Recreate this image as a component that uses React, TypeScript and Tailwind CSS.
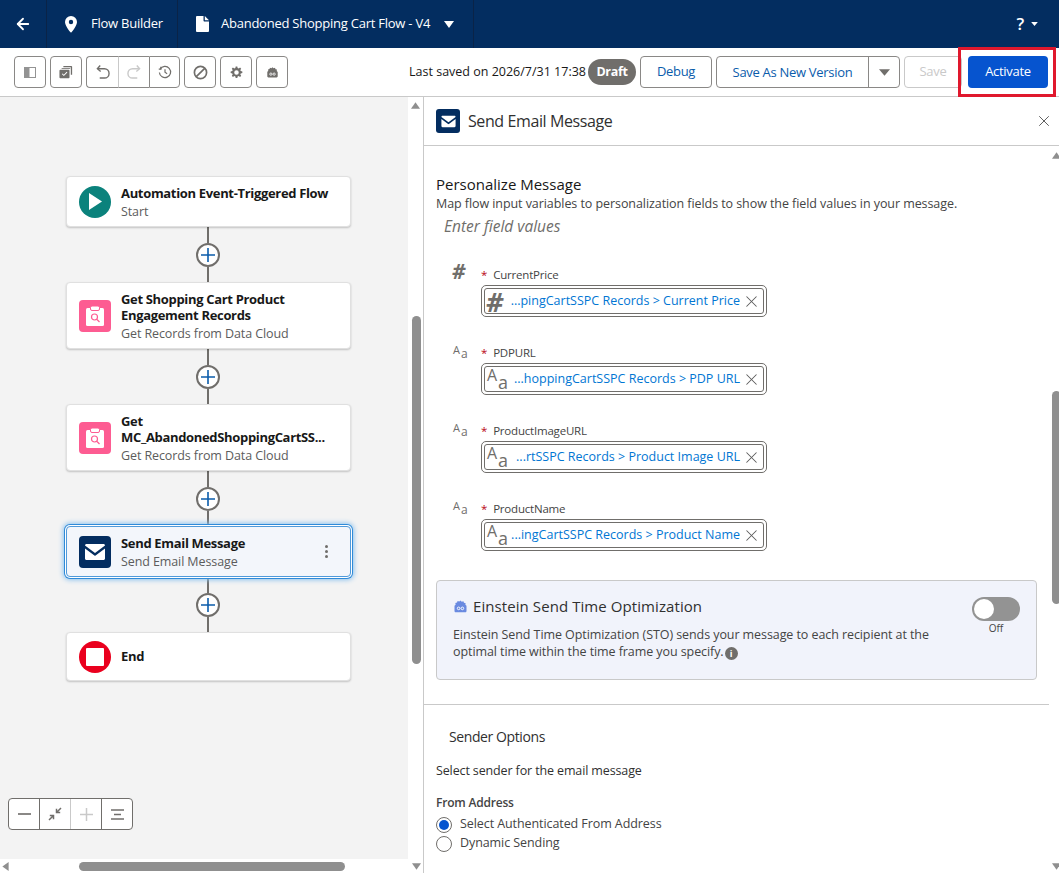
import React from "react";
import { ArrowLeft, X } from "lucide-react";

const Mail = ({ s = 20 }: { s?: number }) => (
  <svg width={s} height={s} viewBox="0 0 24 24" fill="white">
    <path d="M2 5.500C2 4.700 2.700 4 3.500 4h17c.8 0 1.500.7 1.500 1.500L12 13 2 5.500Z" />
    <path d="M2 8.500l9.400 7c.4.300.9.300 1.200 0l9.400-7V18.500c0 .8-.7 1.500-1.500 1.500h-17C2.700 20 2 19.300 2 18.500V8.500Z" />
  </svg>
);

const ClipSearch = () => (
  <svg width="20" height="22" viewBox="0 0 20 22" fill="none">
    <rect x="1" y="3" width="18" height="18" rx="1.500" fill="white" />
    <rect x="5.500" y="1" width="9" height="4.500" rx="1.500" fill="white" stroke="#fd5c92" strokeWidth="1" />
    <circle cx="9.500" cy="12" r="3" stroke="#fd5c92" strokeWidth="1.200" />
    <path d="M12 14.500l2.500 2.500" stroke="#fd5c92" strokeWidth="1.200" />
  </svg>
);

const Bot = ({ s = 14, c = "#706e6b" }: { s?: number; c?: string }) => (
  <svg width={s} height={s} viewBox="0 0 16 16" fill={c}>
    <path d="M8 1.500l1.300 1.400 1.800-.6.600 1.700 1.800.4-.3 1.800 1.200 1.100v5.400c0 .8-.6 1.300-1.300 1.300H2.900c-.7 0-1.300-.5-1.300-1.300V7.100l1.200-1.100-.3-1.800 1.800-.4.600-1.700 1.800.6L8 1.500Z" />
    <circle cx="6" cy="10" r="1.400" fill="none" stroke="white" strokeWidth="1" />
    <circle cx="10" cy="10" r="1.400" fill="none" stroke="white" strokeWidth="1" />
  </svg>
);

const Plus = () => (
  <div className="flex flex-col items-center h-[55px] w-full pr-[1px]">
    <div className="w-[2px] flex-1 bg-[#706e6b]" />
    <div className="w-6 h-6 rounded-full border-2 border-[#706e6b] bg-white flex items-center justify-center shrink-0">
      <svg width="14" height="14" viewBox="0 0 14 14" stroke="#0b5cab" strokeWidth="1.600">
        <path d="M7 0v14M0 7h14" />
      </svg>
    </div>
    <div className="w-[2px] flex-1 bg-[#706e6b]" />
  </div>
);

const Node = ({
  icon,
  title,
  sub,
  selected,
  h,
}: {
  icon: React.ReactNode;
  title: React.ReactNode;
  sub?: string;
  selected?: boolean;
  h: string;
}) => (
  <div
    className={`w-[285px] ${h} rounded flex items-center px-3 relative ${
      selected
        ? "bg-[#f3f6fb] border border-[#4f9ada] shadow-[0_0_0_1px_#ffffff,0_0_0_2px_#2f8ad8,0_0_5px_3px_#8cc2ee]"
        : "bg-white border border-[#e0e0e0] shadow-[0_1px_2px_rgba(0,0,0,0.2)]"
    }`}
  >
    {icon}
    <div className={`ml-[10px] min-w-0 ${sub ? "mt-[2px]" : "-mt-[2px]"}`}>
      <div className="text-[13px] leading-[16px] font-bold text-[#181818] tracking-[-0.33px]">{title}</div>
      {sub && <div className="mt-[2px] text-[12.500px] leading-[18px] text-[#5c5c5c] tracking-[-0.1px]">{sub}</div>}
    </div>
    {selected && (
      <div className="absolute right-[22px] top-[18px] flex flex-col gap-[2px]">
        <span className="w-[3px] h-[3px] bg-[#706e6b] rounded-full" />
        <span className="w-[3px] h-[3px] bg-[#706e6b] rounded-full" />
        <span className="w-[3px] h-[3px] bg-[#706e6b] rounded-full" />
      </div>
    )}
  </div>
);

const Tile = ({ bg, children }: { bg: string; children: React.ReactNode }) => (
  <div className={`w-8 h-8 rounded shrink-0 flex items-center justify-center ${bg}`}>{children}</div>
);

const TB = ({ children, cls = "" }: { children: React.ReactNode; cls?: string }) => (
  <div className={`w-8 h-8 flex items-center justify-center border border-[#8a8886] bg-white rounded ${cls}`}>{children}</div>
);

const Aa = ({ big }: { big?: boolean }) => (
  <span className={`relative inline-block shrink-0 text-[#706e6b] ${big ? "w-[22px] h-[22px]" : "w-4 h-4"}`}>
    <span className={`absolute leading-none ${big ? "text-[16px] left-0 -top-[1px]" : "text-[11px] left-0 top-0"}`}>A</span>
    <span className={`absolute leading-none ${big ? "text-[18px] left-[11px] top-[5px]" : "text-[12px] left-[8px] top-[4px]"}`}>a</span>
  </span>
);

const Hash = ({ big }: { big?: boolean }) => (
  <span className={`shrink-0 text-[#706e6b] font-bold leading-none italic ${big ? "text-[27px] w-[20px] -ml-[1px]" : "text-[21px] w-4 -ml-[1px]"}`}>#</span>
);

const Field = ({ label, value, hash, mt }: { label: string; value: string; hash?: boolean; mt: string }) => (
  <div className={`flex ${mt}`}>
    <div className={`w-[45px] pl-[17px] ${hash ? "-mt-[6px]" : "-mt-[3px]"}`}>{hash ? <Hash /> : <Aa />}</div>
    <div>
      <div className="text-[11.500px] leading-[16px] text-[#444444] tracking-[-0.2px]">
        <span className="text-[#ba0517] mr-[6px]">*</span>
        {label}
      </div>
      <div className="mt-[2px] w-[286px] h-[32px] border border-[#706e6b] rounded-[5px] p-[2px]">
        <div className="h-full border border-[#706e6b] rounded-[3px] flex items-center pl-[2px] pr-[2px]">
          {hash ? <Hash big /> : <Aa big />}
          <span className="flex-1 text-right text-[12.500px] text-[#0176d3] whitespace-nowrap pr-[2px]">{value}</span>
          <X size={19} strokeWidth={1.300} color="#5c5c5c" className="shrink-0" />
        </div>
      </div>
    </div>
  </div>
);

export default function App() {
  return (
    <div className="w-[1059px] h-[873px] flex flex-col overflow-hidden bg-white relative font-['Open_Sans','Noto_Sans',sans-serif]">
      {/* Global header */}
      <header className="h-12 shrink-0 bg-[#032d60] flex items-center text-white text-[13px] tracking-[-0.24px]">
        <div className="w-[47px] h-full flex items-center pl-[14px] border-r border-[#0a2347]">
          <ArrowLeft size={18} strokeWidth={2.400} />
        </div>
        <div className="w-[131px] h-full flex items-center pl-[17px] border-r border-[#0a2347]">
          <svg width="14" height="17" viewBox="0 0 14 17" fill="white">
            <path fillRule="evenodd" d="M7 0a6 6 0 0 1 6 6c0 3.500-4 8.500-5.500 10.300a.7.7 0 0 1-1 0C5 14.500 1 9.500 1 6a6 6 0 0 1 6-6Zm0 3.800a2.200 2.200 0 1 0 0 4.400 2.200 2.200 0 0 0 0-4.400Z" />
          </svg>
          <span className="ml-[13px]">Flow Builder</span>
        </div>
        <div className="w-[296px] h-full flex items-center pl-[18px] border-r border-[#0a2347]">
          <svg width="13" height="16" viewBox="0 0 13 16" fill="white">
            <path d="M1 0h6.500v4.500c0 .5.400 1 1 1H13V15a1 1 0 0 1-1 1H1a1 1 0 0 1-1-1V1a1 1 0 0 1 1-1Z" />
            <path d="M8.800 0 13 4.200H8.800V0Z" />
          </svg>
          <span className="ml-[12px] whitespace-nowrap">Abandoned Shopping Cart Flow - V4</span>
          <svg className="ml-[14px]" width="10" height="7" viewBox="0 0 10 7" fill="white"><path d="M0 0h10L5 7z" /></svg>
        </div>
        <div className="flex-1" />
        <div className="flex items-center mr-[21px] gap-[7px]">
          <span className="text-[17px] font-semibold">?</span>
          <svg width="7" height="4" viewBox="0 0 10 6" fill="white"><path d="M0 0h10L5 6z" /></svg>
        </div>
      </header>

      {/* Toolbar */}
      <div className="h-[49px] shrink-0 bg-white border-b border-[#c9c9c9] flex items-center pl-[14px] pr-[11px] text-[13px] tracking-[-0.3px]">
        <div className="flex gap-1">
          <TB>
            <svg width="12" height="11" viewBox="0 0 12 11"><rect x=".5" y=".5" width="11" height="10" fill="white" stroke="#939393" /><rect x="1" y="1" width="4.500" height="9" fill="#939393" /></svg>
          </TB>
          <TB>
            <svg width="14" height="14" viewBox="0 0 16 16" fill="#706e6b">
              <path d="M5 1h9a1 1 0 0 1 1 1v9h-1.500V2.500H5z" />
              <path d="M3 3.500h9a1 1 0 0 1 1 .9v.1H3z" opacity=".8" />
              <path fillRule="evenodd" d="M1.500 5.500h9.500a1 1 0 0 1 1 1V14a1 1 0 0 1-1 1H1.500a1 1 0 0 1-1-1V6.500a1 1 0 0 1 1-1Zm7.300 2.300-3.300 3.300-1.500-1.500-.8.800 2.300 2.300 4.100-4.100z" />
            </svg>
          </TB>
          <div className="flex">
            <TB cls="rounded-r-none border-r-0">
              <svg width="14" height="16" viewBox="0 0 15 16" fill="none" stroke="#706e6b" strokeWidth="1.500"><path d="M4.500 1 1.500 4.500 5 7.500" /><path d="M2 4.500h7a4.500 4.500 0 0 1 0 10H4" /></svg>
            </TB>
            <div className="w-[31px] h-8 flex items-center justify-center border-y border-l border-[#c9c9c9] border-y-[#8a8886]">
              <svg width="14" height="16" viewBox="0 0 15 16" fill="none" stroke="#c9c9c9" strokeWidth="1.500"><path d="M10.500 1l3 3.500L10 7.500" /><path d="M13 4.500H6a4.500 4.500 0 0 0 0 10h5" /></svg>
            </div>
            <TB cls="rounded-l-none w-[31px]">
              <svg width="14" height="14" viewBox="0 0 15 15" fill="none" stroke="#706e6b" strokeWidth="1.300"><path d="M2.300 4.500A6 6 0 1 1 1.500 8" /><path d="M.8 4.500h3M3 2v3" /><path d="M7.500 4.500v3.300l2.300 1.500" /></svg>
            </TB>
          </div>
          <TB>
            <svg width="15" height="15" viewBox="0 0 16 16" fill="none" stroke="#706e6b" strokeWidth="1.800"><circle cx="8" cy="8" r="6.500" /><path d="M12.500 3.500 3.500 12.500" /></svg>
          </TB>
          <TB>
            <svg width="13" height="13" viewBox="0 0 16 16" fill="#706e6b">
              <path fillRule="evenodd" d="M7 .5h2l.4 2 1.300.5 1.700-1.100 1.400 1.400-1.100 1.700.5 1.300 2 .4v2l-2 .4-.5 1.300 1.100 1.700-1.400 1.400-1.700-1.100-1.300.5-.4 2H7l-.4-2-1.300-.5-1.700 1.100-1.400-1.400 1.100-1.700-.5-1.300-2-.4v-2l2-.4.500-1.300-1.100-1.700 1.400-1.400 1.700 1.100 1.300-.5.4-2Zm1 4.700a2.800 2.800 0 1 0 0 5.600 2.800 2.800 0 0 0 0-5.600Z" />
            </svg>
          </TB>
          <TB>
            <Bot s={13} />
          </TB>
        </div>
        <div className="flex-1" />
        <span className="text-[#181818] whitespace-nowrap text-[12.500px] tracking-[0px] mr-[2px]">Last saved on 2026/7/31 17:38</span>
        <span className="w-12 h-[26px] rounded-full bg-[#706e6b] text-white font-bold text-[12.500px] flex items-center justify-center">Draft</span>
        <div className="ml-1 w-[72px] h-8 border border-[#8a8886] rounded flex items-center justify-center text-[#0b5cab]">Debug</div>
        <div className="ml-1 w-[184px] h-8 border border-[#8a8886] rounded flex items-center text-[#0b5cab]">
          <span className="w-[152px] text-center border-r border-[#8a8886] leading-[30px]">Save As New Version</span>
          <span className="flex-1 flex justify-center">
            <svg width="11" height="7" viewBox="0 0 10 6" fill="#706e6b"><path d="M0 0h10L5 6z" /></svg>
          </span>
        </div>
        <div className="ml-1 w-[58px] h-8 border border-[#c9c9c9] rounded flex items-center justify-center text-[#c9c9c9]">Save</div>
        <div className="ml-[6px] w-20 h-8 rounded bg-[#0654cf] text-white flex items-center justify-center">Activate</div>
      </div>

      <div className="flex-1 flex min-h-0">
        {/* Canvas */}
        <div className="w-[424px] shrink-0 flex flex-col border-r border-[#c9c9c9]">
          <div className="flex-1 flex min-h-0">
            <div className="w-[408px] bg-[#f3f3f3] relative overflow-hidden">
              <div className="flex flex-col items-center pt-[79px] pl-[9px] w-[408px]">
                <Node
                  h="h-[51px]"
                  icon={
                    <div className="w-8 h-8 rounded-full bg-[#0b827c] shrink-0 flex items-center justify-center">
                      <svg width="14" height="17" viewBox="0 0 14 17" fill="white"><path d="M1 0l13 8.500L1 17z" /></svg>
                    </div>
                  }
                  title="Automation Event-Triggered Flow"
                  sub="Start"
                />
                <Plus />
                <Node
                  h="h-[67px]"
                  icon={<Tile bg="bg-[#fd5c92]"><ClipSearch /></Tile>}
                  title={<>Get Shopping Cart Product<br />Engagement Records</>}
                  sub="Get Records from Data Cloud"
                />
                <Plus />
                <Node
                  h="h-[67px]"
                  icon={<Tile bg="bg-[#fd5c92]"><ClipSearch /></Tile>}
                  title={<>Get<br />MC_AbandonedShoppingCartSS...</>}
                  sub="Get Records from Data Cloud"
                />
                <Plus />
                <Node h="h-[51px]" selected icon={<Tile bg="bg-[#032d60]"><Mail s={24} /></Tile>} title="Send Email Message" sub="Send Email Message" />
                <Plus />
                <Node
                  h="h-[49px]"
                  icon={
                    <div className="w-8 h-8 rounded-full bg-[#ea001e] shrink-0 flex items-center justify-center">
                      <div className="w-[18px] h-[18px] bg-white rounded-[1px]" />
                    </div>
                  }
                  title="End"
                />
              </div>
              {/* zoom controls */}
              <div className="absolute left-2 bottom-[29px] flex h-8 w-[125px] border border-[#706e6b] rounded bg-white">
                <div className="w-[31px] flex items-center justify-center border-r border-[#706e6b]">
                  <span className="w-[13px] h-[2px] bg-[#8a8886]" />
                </div>
                <div className="w-[31px] flex items-center justify-center border-r border-[#c9c9c9]">
                  <svg width="14" height="14" viewBox="0 0 14 14" fill="none" stroke="#706e6b" strokeWidth="1.500">
                    <path d="M13 1 8.500 5.500M8.500 1.800v3.700h3.700M1 13l4.500-4.500M5.500 12.200V8.500H1.800" />
                  </svg>
                </div>
                <div className="w-[31px] flex items-center justify-center border-r border-[#706e6b]">
                  <svg width="13" height="13" viewBox="0 0 13 13" stroke="#c9c9c9" strokeWidth="1.500"><path d="M6.500 0v13M0 6.500h13" /></svg>
                </div>
                <div className="flex-1 flex items-center justify-center">
                  <svg width="13" height="11" viewBox="0 0 13 11" stroke="#706e6b" strokeWidth="1.400"><path d="M0 1h13M3 5.500h7M0 10h13" /></svg>
                </div>
              </div>
            </div>
            {/* vertical scrollbar */}
            <div className="w-[15px] bg-white flex flex-col items-center relative">
              <svg className="mt-[5px]" width="9" height="7" viewBox="0 0 10 7" fill="#8f8f8f"><path d="M5 0l5 7H0z" /></svg>
              <div className="absolute top-[219px] left-[4px] w-[9px] h-[348px] rounded-full bg-[#8f8f8f]" />
            </div>
          </div>
          {/* horizontal scrollbar */}
          <div className="h-[14px] shrink-0 bg-white flex items-center relative">
            <svg className="ml-[2px]" width="7" height="9" viewBox="0 0 7 10" fill="#8f8f8f"><path d="M0 5l7-5v10z" /></svg>
            <div className="absolute left-[79px] top-[3px] w-[266px] h-[9px] rounded-full bg-[#8f8f8f]" />
            <svg className="ml-auto mr-[2px]" width="9" height="7" viewBox="0 0 10 7" fill="#8f8f8f"><path d="M5 7l5-7H0z" /></svg>
          </div>
        </div>

        {/* Right panel */}
        <div className="flex-1 min-w-0 flex flex-col">
          <div className="h-[49px] shrink-0 border-b border-[#c9c9c9] flex items-center pl-[12px] pr-[6px]">
            <div className="w-6 h-6 rounded-[3px] bg-[#032d60] flex items-center justify-center"><Mail s={17} /></div>
            <span className="ml-2 text-[16px] text-[#303030] tracking-[-0.4px] flex-1">Send Email Message</span>
            <X size={18} strokeWidth={1.300} color="#5c5c5c" />
          </div>
          <div className="flex-1 min-h-0 flex">
            <div className="flex-1 min-w-0 pl-[12px] overflow-hidden">
              <div className="pt-[28px] text-[15px] leading-[20px] text-[#181818]">Personalize Message</div>
              <div className="text-[12.500px] leading-[18px] text-[#444444] tracking-[-0.07px] mt-[1px] whitespace-nowrap">Map flow input variables to personalization fields to show the field values in your message.</div>
              <div className="mt-[3px] ml-2 text-[15.500px] leading-[20px] italic text-[#706e6b]">Enter field values</div>

              <Field mt="mt-[31px]" hash label="CurrentPrice" value="...pingCartSSPC Records > Current Price" />
              <Field mt="mt-[28px]" label="PDPURL" value="...hoppingCartSSPC Records > PDP URL" />
              <Field mt="mt-[28px]" label="ProductImageURL" value="...rtSSPC Records > Product Image URL" />
              <Field mt="mt-[28px]" label="ProductName" value="...ingCartSSPC Records > Product Name" />

              <div className="mt-[29px] w-[601px] h-[100px] bg-[#f1f3fb] border border-[#c9c9c9] rounded flex pl-4 pr-[16px] pt-[14px]">
                <div className="flex-1 min-w-0">
                  <div className="flex items-center">
                    <Bot s={15} c="#6a8ae0" />
                    <span className="ml-[5px] text-[15px] leading-[22px] text-[#303030] tracking-[0.08px]">Einstein Send Time Optimization</span>
                  </div>
                  <div className="mt-[9px] text-[12.500px] leading-[17px] text-[#444444] tracking-[-0.08px]">
                    Einstein Send Time Optimization (STO) sends your message to each recipient at the
                    <br />
                    optimal time within the time frame you specify.
                    <span className="inline-flex ml-[1px] w-[13px] h-[13px] rounded-full bg-[#706e6b] text-white text-[9px] font-bold items-center justify-center align-[-1px]">i</span>
                  </div>
                </div>
                <div className="flex flex-col items-center mt-[2px]">
                  <div className="w-12 h-6 rounded-full bg-[#939393] p-[2px]">
                    <div className="w-5 h-5 rounded-full bg-white" />
                  </div>
                  <span className="text-[10px] leading-[14px] text-[#444444]">Off</span>
                </div>
              </div>

              <div className="-ml-[12px] mt-[24px] border-t border-[#c9c9c9]" />
              <div className="mt-[22px] ml-[13px] text-[14px] leading-[20px] text-[#303030] tracking-[-0.4px]">Sender Options</div>
              <div className="mt-[15px] text-[12.500px] leading-[18px] text-[#303030] tracking-[-0.13px]">Select sender for the email message</div>
              <div className="mt-[15px] text-[12px] leading-[16px] font-semibold text-[#444444] tracking-[-0.2px]">From Address</div>
              <label className="flex items-center h-[19px] mt-[4px] text-[12.500px] text-[#444444] tracking-[-0.08px]">
                <span className="w-4 h-4 rounded-full border border-[#706e6b] flex items-center justify-center">
                  <span className="w-[10px] h-[10px] rounded-full bg-[#0654cf]" />
                </span>
                <span className="ml-2">Select Authenticated From Address</span>
              </label>
              <label className="flex items-center h-[19px] text-[12.500px] text-[#444444] tracking-[-0.08px]">
                <span className="w-4 h-4 rounded-full border border-[#706e6b]" />
                <span className="ml-2">Dynamic Sending</span>
              </label>
            </div>
            {/* right scrollbar */}
            <div className="w-[10px] shrink-0 bg-white relative flex flex-col overflow-hidden">
              <svg className="mt-[6px] ml-[3px] shrink-0" width="9" height="7" viewBox="0 0 10 7" fill="#8f8f8f"><path d="M5 0l5 7H0z" /></svg>
              <div className="absolute top-[245px] left-[3px] w-[9px] h-[213px] rounded-full bg-[#8f8f8f]" />
              <svg className="mt-auto mb-[3px] ml-[3px] shrink-0" width="9" height="7" viewBox="0 0 10 7" fill="#8f8f8f"><path d="M5 7l5-7H0z" /></svg>
            </div>
          </div>
        </div>
      </div>

      {/* Highlight box drawn over the screenshot */}
      <div className="absolute left-[958px] top-[47px] w-[98px] h-[50px] border-[3px] border-[#e0182d] pointer-events-none" />
    </div>
  );
}
